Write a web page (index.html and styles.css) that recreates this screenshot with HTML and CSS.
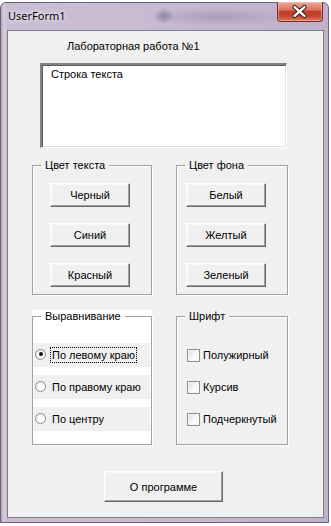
FILE: index.html
```html
<!DOCTYPE html>
<html lang="ru">
  <head>
    <meta charset="UTF-8" />
    <meta name="viewport" content="width=device-width, initial-scale=1.0" />
    <title>UserForm1</title>
    <link rel="stylesheet" href="styles.css">
  </head>
  <body>
    <div class="window">
      <div class="titlebar">
        <span class="title">UserForm1</span>
        <button class="close" title="Закрыть">
          <svg width="46" height="19" viewBox="0 0 46 19">
            <path d="M18 5 L28 14 M28 5 L18 14" stroke="#3b1e1a" stroke-width="4.6" stroke-linecap="round" />
            <path d="M18 5 L28 14 M28 5 L18 14" stroke="#ffffff" stroke-width="2.4" stroke-linecap="round" />
          </svg>
        </button>
      </div>

      <div class="client">
        <div class="caption">Лабораторная работа №1</div>
        <div class="textbox">Строка текста</div>

        <div class="frames">
          <div class="frame frame-wide">
            <div class="frame-box">
              <span class="frame-title">Цвет текста</span>
              <div class="btn-col">
                <button class="btn">Черный</button>
                <button class="btn">Синий</button>
                <button class="btn">Красный</button>
              </div>
            </div>
          </div>

          <div class="frame frame-narrow">
            <div class="frame-box">
              <span class="frame-title">Цвет фона</span>
              <div class="btn-col">
                <button class="btn">Белый</button>
                <button class="btn">Желтый</button>
                <button class="btn">Зеленый</button>
              </div>
            </div>
          </div>
        </div>

        <div class="frames frames-second">
          <div class="frame frame-wide frame-white">
            <div class="frame-box">
              <span class="frame-title">Выравнивание</span>
              <div class="opt-col">
                <label class="opt"><span class="radio checked"></span><span class="opt-text focused">По левому краю</span></label>
                <label class="opt"><span class="radio"></span><span class="opt-text">По правому краю</span></label>
                <label class="opt"><span class="radio"></span><span class="opt-text">По центру</span></label>
              </div>
            </div>
          </div>

          <div class="frame frame-narrow">
            <div class="frame-box">
              <span class="frame-title">Шрифт</span>
              <div class="opt-col chk-col">
                <label class="opt"><span class="check"></span><span class="chk-text">Полужирный</span></label>
                <label class="opt"><span class="check"></span><span class="chk-text">Курсив</span></label>
                <label class="opt"><span class="check"></span><span class="chk-text">Подчеркнутый</span></label>
              </div>
            </div>
          </div>
        </div>

        <button class="btn btn-about">О программе</button>
      </div>
    </div>
  </body>
</html>
```

FILE: styles.css
```css
* {
  box-sizing: border-box;
}

body {
  margin: 0;
  background: #ffffff;
  font-family: "Liberation Sans", Arial, sans-serif;
  font-size: 11px;
  color: #000;
}

.window {
  width: 329px;
  height: 521px;
  margin-top: 2px;
  border: 1px solid #6d6275;
  border-radius: 6px 6px 0 0;
  display: flex;
  flex-direction: column;
  background:
    radial-gradient(ellipse 70px 9px at 215px 14px, rgba(120, 108, 145, 0.35), transparent),
    radial-gradient(ellipse 10px 8px at 163px 13px, rgba(70, 80, 110, 0.45), transparent),
    linear-gradient(90deg, #b3a4bd 0px, #d7cedd 3px, #c9bdd3 6px, #c8bbd2 40%, #bfb0cc 100%);
}

.titlebar {
  height: 27px;
  display: flex;
  align-items: flex-start;
}

.title {
  font-family: "Noto Sans", sans-serif;
  font-size: 11px;
  line-height: 16px;
  padding: 5px 0 0 7px;
  text-shadow: 0 0 6px #f4f0f6, 0 0 3px #f4f0f6;
}

.close {
  margin: -1px 5px 0 auto;
  width: 46px;
  height: 20px;
  padding: 0;
  border: 1px solid #6e2f25;
  border-top: none;
  border-radius: 0 0 4px 4px;
  background: linear-gradient(#eaa899 0%, #d9735f 42%, #c33f28 50%, #c5452e 75%, #de8064 100%);
  box-shadow: inset 0 0 0 1px rgba(255, 210, 200, 0.45);
  display: flex;
  align-items: center;
  justify-content: center;
}

.close svg {
  display: block;
  margin-left: -1px;
}

.client {
  height: 488px;
  margin: 0 4px 0 6px;
  border: 1px solid #808080;
  background: #f0f0f0;
  padding: 9px 0 15px 24px;
}

.caption {
  line-height: 13px;
  margin-left: 35px;
}

.textbox {
  width: 247px;
  height: 85px;
  margin: 10px 0 0 8px;
  background: #fff;
  border-style: solid;
  border-width: 2px 1px 1px 2px;
  border-color: #828282 #ffffff #ffffff #828282;
  box-shadow: inset 1px 1px 0 #5f5f5f, inset -1px -1px 0 #e3e3e3;
  padding: 3px 0 0 9px;
  line-height: 13px;
}

.frames {
  display: flex;
  gap: 24px;
  margin-top: 11px;
}

.frames-second {
  margin-top: 15px;
}

.frame {
  padding-top: 6px;
}

.frame-wide {
  width: 120px;
}

.frame-narrow {
  width: 112px;
}

.frame-white {
  background: #fff;
}

.frame-box {
  border: 1px solid #a0a0a0;
  box-shadow: inset 1px 1px 0 #fff, 1px 1px 0 #fff;
}

.frame-title {
  display: block;
  width: max-content;
  margin: -7px 0 0 8px;
  padding: 0 4px;
  line-height: 13px;
  background: #f0f0f0;
}

.frame-white .frame-title {
  background: #fff;
}

.btn-col {
  display: flex;
  flex-direction: column;
  gap: 16px;
  padding: 11px 0 7px;
}

.frame-wide .btn-col {
  padding-left: 17px;
}

.frame-narrow .btn-col {
  padding-left: 9px;
}

.btn {
  width: 80px;
  height: 24px;
  padding: 0;
  font-family: inherit;
  font-size: 11px;
  color: #000;
  background: #f0f0f0;
  border: 1px solid;
  border-color: #ffffff #696969 #696969 #ffffff;
  box-shadow: inset -1px -1px 0 #a0a0a0, inset 1px 1px 0 #f8f8f8;
}

.btn-about {
  display: block;
  width: 119px;
  height: 31px;
  margin: 26px 0 0 72px;
}

.opt-col {
  display: flex;
  flex-direction: column;
  gap: 8px;
  padding: 20px 1px 13px;
}

.opt {
  height: 24px;
  display: flex;
  align-items: center;
  background: #f0f0f0;
  padding-left: 1px;
}

.radio {
  width: 11px;
  height: 11px;
  border-radius: 50%;
  border: 1px solid #8b8b8b;
  background: radial-gradient(circle at 60% 60%, #ffffff 40%, #dcdcdc 100%);
  margin-top: -2px;
  margin-right: 4px;
  display: flex;
  align-items: center;
  justify-content: center;
}

.radio.checked::after {
  content: "";
  width: 4px;
  height: 4px;
  border-radius: 50%;
  background: #111;
}

.opt-text {
  line-height: 14px;
  padding: 0 1px;
  border: 1px dotted transparent;
}

.opt-text.focused {
  border-color: #000;
}

.chk-col {
  padding-left: 9px;
}

.check {
  width: 13px;
  height: 13px;
  border: 1px solid #8e8f8f;
  background: linear-gradient(135deg, #dedede 0%, #f6f6f6 50%, #ffffff 100%);
  box-shadow: inset 0 0 0 1px #f4f4f4;
  margin-right: 3px;
}

.chk-text {
  line-height: 14px;
}
```
